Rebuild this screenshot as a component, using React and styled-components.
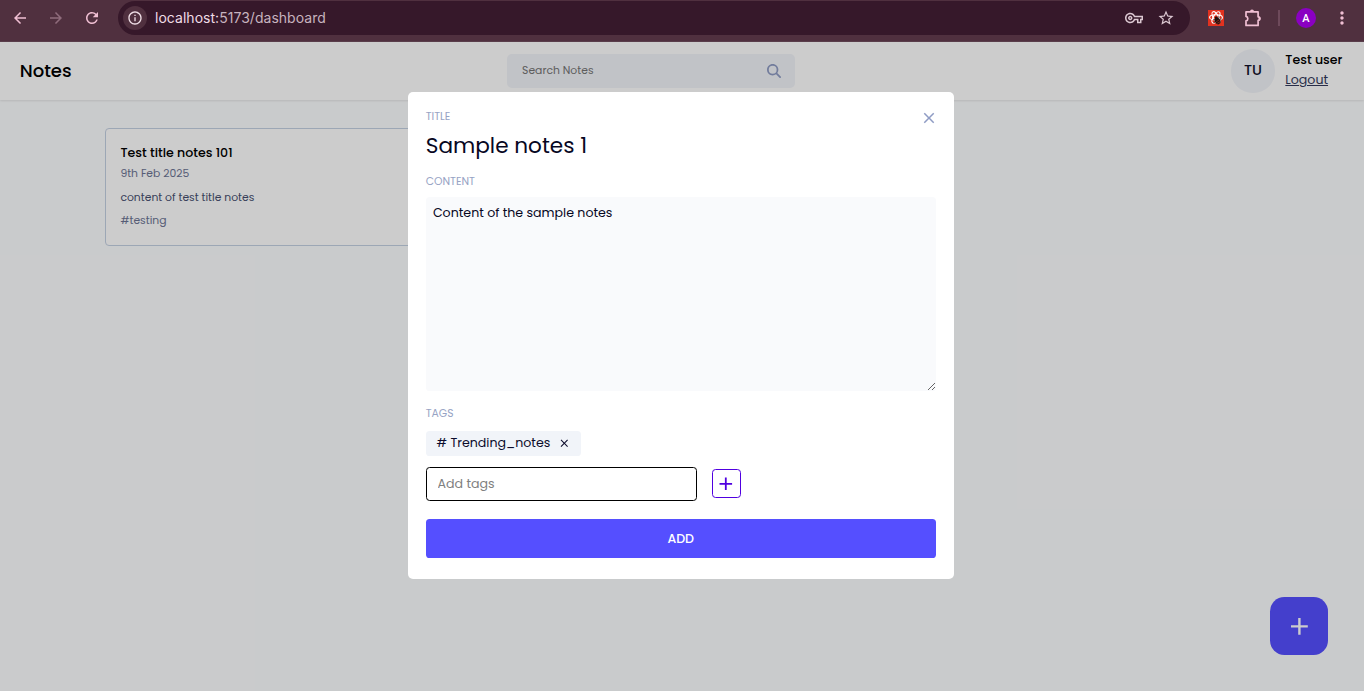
import React from 'react';
import styled, { createGlobalStyle } from 'styled-components';
import {
  MdAdd, MdArrowBack, MdArrowForward, MdClose, MdMoreVert,
  MdRefresh, MdStarBorder, MdInfoOutline, MdOutlineVpnKey,
} from 'react-icons/md';
import { FaMagnifyingGlass } from 'react-icons/fa6';

const GlobalStyle = createGlobalStyle`
  *, *::before, *::after { box-sizing: border-box; }
  body { margin: 0; overflow: hidden; }
  body, button, input, textarea { font-family: Poppins, Inter, sans-serif; }
  button { border: 0; padding: 0; cursor: pointer; }
  input, textarea { border: 0; outline: 0; margin: 0; }
  svg { display: block; flex-shrink: 0; }
`;

const Screen = styled.div`
  display: flex;
  flex-direction: column;
  height: 691px;
  background: #fcfeff;
`;

/* Browser bar */
const BrowserBar = styled.div`
  display: flex;
  align-items: flex-start;
  height: 42px;
  flex-shrink: 0;
  padding: 1px 0 0 11px;
  background: #50303f;
  border-bottom: 1px solid #5b3f4c;
  color: #f0bfd3;
`;

const NavIcons = styled.div`
  display: flex;
  gap: 18px;
  height: 34px;
  align-items: center;
  margin-right: 17px;
`;

const Forward = styled.span`
  color: #8f6c7c;
`;

const AddressBar = styled.div`
  display: flex;
  align-items: center;
  width: 1072px;
  height: 34px;
  flex-shrink: 0;
  padding: 0 15px 0 5px;
  border-radius: 17px;
  background: #36182a;
`;

const SiteInfo = styled.span`
  display: grid;
  place-items: center;
  width: 24px;
  height: 24px;
  border-radius: 50%;
  background: #50303f;
  color: #f0dfe7;
`;

const Url = styled.span`
  flex: 1;
  margin-left: 8px;
  font: 14px/20px Inter, sans-serif;
  letter-spacing: 0.03px;
  color: #c7b3bf;
`;

const Host = styled.span`
  color: #efdce6;
`;

const AddressIcons = styled.div`
  display: flex;
  align-items: center;
  gap: 14px;
  color: #dcc8d2;
`;

const Extensions = styled.div`
  display: flex;
  align-items: center;
  gap: 20px;
  height: 34px;
  margin-left: 18px;
`;

const Divider = styled.span`
  width: 2px;
  height: 16px;
  margin: 0 -4px;
  background: #6e4a5b;
`;

const Profile = styled.span`
  display: grid;
  place-items: center;
  width: 20px;
  height: 20px;
  padding-top: 1px;
  border-radius: 50%;
  background: #8a00c2;
  color: #fff;
  font: 500 11px/19px Roboto, sans-serif;
`;

const BrowserMenu = styled(MdMoreVert)`
  margin-left: -4px;
`;

/* Application */
const Page = styled.div`
  position: relative;
  flex: 1;
`;

const Header = styled.header`
  display: flex;
  align-items: center;
  justify-content: space-between;
  height: 58px;
  padding: 0 21.6px 0 19.7px;
  background: #fff;
  box-shadow: 0 1px 2px rgba(0, 0, 0, 0.1);
`;

const Brand = styled.h2`
  margin: 0;
  padding-bottom: 2px;
  width: 51.5px;
  font-size: 18px;
  font-weight: 500;
  line-height: 25px;
  color: #000;
`;

const SearchBox = styled.div`
  display: flex;
  align-items: center;
  width: 288px;
  height: 34px;
  padding: 0 14.4px 0 14.8px;
  border-radius: 5px;
  background: #f2f4f9;
`;

const SearchInput = styled.input`
  flex: 1;
  background: transparent;
  font-size: 10.8px;
  line-height: 14px;
  padding: 0;
  &::placeholder { color: #757575; opacity: 1; }
`;

const UserArea = styled.div`
  display: flex;
  align-items: center;
  gap: 10.8px;
`;

const Avatar = styled.div`
  display: grid;
  place-items: center;
  width: 43.2px;
  height: 43.2px;
  padding-bottom: 1px;
  border-radius: 50%;
  background: #f2f4f9;
  color: #11112b;
  font-size: 14.4px;
  font-weight: 500;
`;

const UserName = styled.p`
  margin: 0;
  font-size: 12.6px;
  font-weight: 500;
  line-height: 18px;
  color: #000;
`;

const Logout = styled.button`
  display: block;
  height: 23px;
  background: none;
  color: #33395a;
  font-size: 12.6px;
  line-height: 18px;
  text-decoration: underline;
`;

const Notes = styled.main`
  display: grid;
  grid-template-columns: repeat(3, 1fr);
  gap: 14.4px;
  margin: 28px 105px 0;
`;

const Note = styled.article`
  height: 118px;
  padding: 15px 14.4px;
  border: 1px solid #c4d1e3;
  border-radius: 4px;
  background: #fff;
`;

const NoteTitle = styled.h6`
  margin: 0;
  font-size: 12.6px;
  font-weight: 500;
  line-height: 18px;
  color: #000;
`;

const NoteDate = styled.div`
  font-size: 10.8px;
  line-height: 24px;
  color: #6c7494;
`;

const NoteText = styled.p`
  margin: 5px 0 0;
  font-size: 10.8px;
  line-height: 14.4px;
  color: #474f70;
`;

const NoteTags = styled.div`
  margin-top: 7px;
  font-size: 10.8px;
  line-height: 18px;
  color: #6c7494;
`;

const AddButton = styled.button`
  position: absolute;
  right: 36px;
  bottom: 36px;
  display: grid;
  place-items: center;
  width: 58px;
  height: 58px;
  border-radius: 14.4px;
  background: #554fff;
  color: #fff;
  font-size: 28.8px;
`;

/* Editor dialog */
const Overlay = styled.div`
  position: absolute;
  inset: 0;
  display: flex;
  align-items: flex-start;
  justify-content: center;
  padding: 50px 2.6px 0 0;
  background: rgba(0, 0, 0, 0.2);
`;

const Modal = styled.div`
  display: flex;
  flex-direction: column;
  width: 546px;
  height: 487px;
  padding: 18px;
  border-radius: 5px;
  background: #fff;
`;

const ModalTop = styled.div`
  display: flex;
  justify-content: space-between;
  height: 65px;
`;

const TitleField = styled.div`
  flex: 1;
`;

const Label = styled.label`
  display: block;
  font-size: 10.8px;
  line-height: 14px;
  color: #97a3c4;
`;

const TitleInput = styled.input`
  display: block;
  width: 100%;
  height: 29px;
  margin-top: 7px;
  padding: 0;
  font-size: 21.6px;
  line-height: 29px;
  color: #07071f;
`;

const CloseButton = styled.button`
  display: grid;
  place-items: center;
  width: 36px;
  height: 36px;
  margin: -10px -11px 0 0;
  background: none;
  color: #8f9cc4;
  font-size: 18px;
`;

const Content = styled.textarea`
  height: 194px;
  margin-top: 8px;
  padding: 7.2px;
  border-radius: 3.6px;
  background: #f9fafc;
  color: #07071f;
  font-size: 12.6px;
  line-height: 18px;
  resize: vertical;
`;

const TagsField = styled.div`
  margin-top: 16px;
`;

const Chip = styled.span`
  display: flex;
  align-items: center;
  width: fit-content;
  height: 25px;
  margin-top: 10px;
  padding: 0 10.8px 2px;
  gap: 7.2px;
  border-radius: 3.6px;
  background: #f1f4f9;
  color: #0c0c2c;
  font-size: 12.6px;
  line-height: 18px;
`;

const RemoveTag = styled(MdClose)`
  margin: 2px 0 0 0.5px;
`;

const TagEntry = styled.div`
  display: flex;
  align-items: flex-start;
  gap: 15px;
  margin-top: 11px;
`;

const TagInput = styled.input`
  width: 271px;
  height: 34px;
  padding: 0 10.8px;
  border: 1px solid #000;
  border-radius: 3.6px;
  font-size: 12.6px;
  &::placeholder { color: #808080; opacity: 1; }
`;

const TagAdd = styled.button`
  display: grid;
  place-items: center;
  width: 29px;
  height: 29px;
  margin-top: 2px;
  padding-right: 1px;
  border: 1px solid #5000e0;
  border-radius: 3.6px;
  background: #fff;
  color: #5000e0;
  font-size: 21.6px;
`;

const Submit = styled.button`
  height: 39px;
  margin-top: 18px;
  border-radius: 3.6px;
  background: #554fff;
  color: #fff;
  font-size: 12.6px;
  font-weight: 500;
`;

function PuzzleIcon() {
  return (
    <svg width="18" height="20" viewBox="0 0 18 20" fill="none" stroke="currentColor" strokeWidth="1.7" strokeLinejoin="round">
      <path d="M2 3.9h12.1v4.9a1.6 1.6 0 0 1 0 3.6v5H2v-4.5a2.3 2.3 0 0 0 0-4.5z" />
      <path d="M6 3.5a2 2 0 0 1 4 0zM14.5 8.6a2 2 0 0 1 0 4z" fill="currentColor" stroke="none" />
    </svg>
  );
}

function ReactExtensionIcon() {
  return (
    <svg width="16" height="16" viewBox="0 0 16 16">
      <rect width="16" height="16" fill="#e2321f" />
      <g fill="none" stroke="#fff" strokeWidth="1.1">
        <ellipse cx="8" cy="7.4" rx="6.4" ry="2.6" />
        <ellipse cx="8" cy="7.4" rx="6.4" ry="2.6" transform="rotate(60 8 7.4)" />
        <ellipse cx="8" cy="7.4" rx="6.4" ry="2.6" transform="rotate(120 8 7.4)" />
      </g>
      <ellipse cx="9.6" cy="11" rx="2.7" ry="3.5" transform="rotate(-35 9.6 11)" fill="#22120f" />
      <circle cx="8.2" cy="7.9" r="1.4" fill="#22120f" />
      <path d="M5.4 9.4 8 10M5.6 12.8l2.4-1.4M10.8 6.2l.2 2.4M13.4 8.8l-2.2 1" stroke="#22120f" strokeWidth=".8" />
      <path d="M8.3 11.6l2.8-1.6M9.2 13.3l2.9-1.6" stroke="#e2321f" strokeWidth=".5" />
    </svg>
  );
}

export default function App() {
  return (
    <Screen>
      <GlobalStyle />
      <BrowserBar>
        <NavIcons>
          <MdArrowBack size={18} />
          <Forward><MdArrowForward size={18} /></Forward>
          <MdRefresh size={18} />
        </NavIcons>
        <AddressBar>
          <SiteInfo><MdInfoOutline size={16} /></SiteInfo>
          <Url><Host>localhost:</Host>5173/dashboard</Url>
          <AddressIcons>
            <MdOutlineVpnKey size={18} />
            <MdStarBorder size={18} />
          </AddressIcons>
        </AddressBar>
        <Extensions>
          <ReactExtensionIcon />
          <PuzzleIcon />
          <Divider />
          <Profile>A</Profile>
          <BrowserMenu size={20} />
        </Extensions>
      </BrowserBar>

      <Page>
        <Header>
          <Brand>Notes</Brand>
          <SearchBox>
            <SearchInput placeholder="Search Notes" />
            <FaMagnifyingGlass size={14} color="#8f9cc4" />
          </SearchBox>
          <UserArea>
            <Avatar>TU</Avatar>
            <div>
              <UserName>Test user</UserName>
              <Logout>Logout</Logout>
            </div>
          </UserArea>
        </Header>
        <Notes>
          <Note>
            <NoteTitle>Test title notes 101</NoteTitle>
            <NoteDate>9th Feb 2025</NoteDate>
            <NoteText>content of test title notes</NoteText>
            <NoteTags>#testing</NoteTags>
          </Note>
        </Notes>
        <AddButton><MdAdd /></AddButton>

        <Overlay>
          <Modal>
            <ModalTop>
              <TitleField>
                <Label>TITLE</Label>
                <TitleInput defaultValue="Sample notes 1" />
              </TitleField>
              <CloseButton><MdClose /></CloseButton>
            </ModalTop>
            <Label>CONTENT</Label>
            <Content defaultValue="Content of the sample notes" />
            <TagsField>
              <Label>TAGS</Label>
              <Chip># Trending_notes <RemoveTag /></Chip>
              <TagEntry>
                <TagInput placeholder="Add tags" />
                <TagAdd><MdAdd /></TagAdd>
              </TagEntry>
            </TagsField>
            <Submit>ADD</Submit>
          </Modal>
        </Overlay>
      </Page>
    </Screen>
  );
}
